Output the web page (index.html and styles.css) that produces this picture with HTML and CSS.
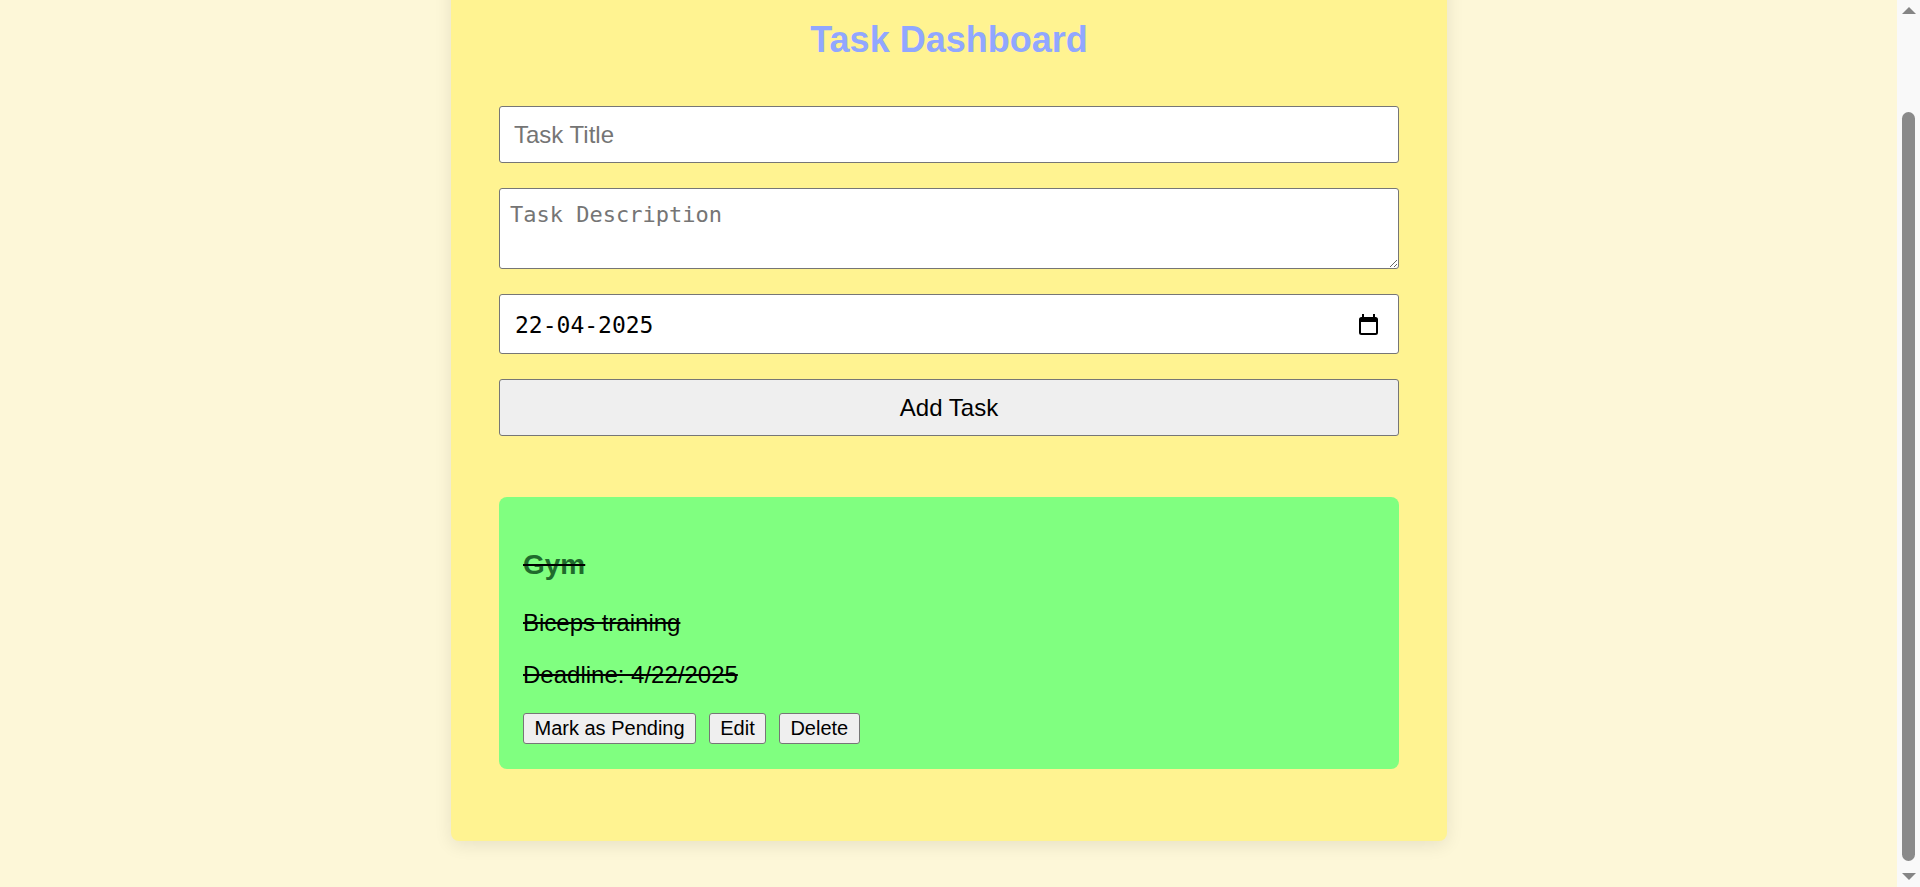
FILE: index.html
```html
<!DOCTYPE html>
<html lang="en">
<head>
<meta charset="utf-8">
<title>Task Dashboard</title>
<link rel="stylesheet" href="styles.css">
</head>
<body>
<div class="container">
  <h1 class="title">Task Dashboard</h1>
  <form class="task-form">
    <input class="field field-text" type="text" placeholder="Task Title">
    <textarea class="field field-area" placeholder="Task Description"></textarea>
    <div class="field field-date">
      <span class="date-value">22-04-2025</span>
      <svg class="cal-icon" width="19" height="21" viewBox="0 0 19 21" aria-hidden="true">
        <path d="M3 0h2v4H3zM14 0h2v4h-2z" fill="#000"/>
        <path fill="#000" fill-rule="evenodd" d="M2.5 3h14A2.5 2.5 0 0 1 19 5.5v13a2.5 2.5 0 0 1-2.5 2.5h-14A2.5 2.5 0 0 1 0 18.5v-13A2.5 2.5 0 0 1 2.5 3zM2 8v10.5a.5.5 0 0 0 .5.5h14a.5.5 0 0 0 .5-.5V8z"/>
      </svg>
    </div>
    <button type="button" class="add-btn">Add Task</button>
  </form>
  <div class="task-list">
    <div class="task-card">
      <h3 class="task-title done">Gym</h3>
      <p class="task-text done">Biceps training</p>
      <p class="task-text done">Deadline: 4/22/2025</p>
      <div class="task-actions">
        <button type="button" class="action-btn">Mark as Pending</button>
        <button type="button" class="action-btn">Edit</button>
        <button type="button" class="action-btn">Delete</button>
      </div>
    </div>
  </div>
</div>
<div class="scrollbar" aria-hidden="true">
  <span class="sb-arrow sb-up"></span>
  <span class="sb-thumb"></span>
  <span class="sb-arrow sb-down"></span>
</div>
<script src="script.js"></script>
</body>
</html>
```

FILE: styles.css
```css
html {
  background: #fdf7d8;
}

body {
  margin: 0;
  padding: 40px 22px 46px 0;
  background: #fdf7d8;
  font-family: "Liberation Sans", Arial, sans-serif;
  font-size: 24px;
  color: #000;
}

.container {
  max-width: 900px;
  margin: 0 auto;
  padding: 48px;
  background: #fff391;
  border-radius: 8px;
  box-shadow: 0 4px 18px rgba(0, 0, 0, 0.09);
}

.title {
  margin: 0 0 45px;
  text-align: center;
  font-size: 36px;
  font-weight: bold;
  line-height: normal;
  color: #91a7ff;
}

.task-form {
  display: flex;
  flex-direction: column;
  gap: 25px;
  margin: 0;
}

.field {
  box-sizing: border-box;
  width: 100%;
  margin: 0;
  border: 1px solid #767676;
  border-radius: 3px;
  background: #fff;
  color: #000;
}

.field-text {
  height: 57px;
  padding: 14px;
  font: 24px/27px "Liberation Sans", Arial, sans-serif;
}

.field-text::placeholder,
.field-area::placeholder {
  color: #757575;
}

.field-area {
  display: block;
  height: 81px;
  padding: 12px 10px;
  font: 22px/27px "DejaVu Sans Mono", monospace;
  resize: both;
}

.field-date {
  height: 60px;
  display: flex;
  align-items: center;
  justify-content: space-between;
  padding: 0 20px 0 15px;
  font: 23px/27px "DejaVu Sans Mono", monospace;
}

.date-value {
  margin-top: 3px;
}

.cal-icon {
  display: block;
}

.add-btn {
  box-sizing: border-box;
  width: 100%;
  height: 57px;
  margin: 0;
  padding: 14px;
  font: 24px/27px "Liberation Sans", Arial, sans-serif;
  color: #000;
  background: #efefef;
  border: 1px solid #767676;
  border-radius: 3px;
}

.task-list {
  margin-top: 60.5px;
}

.task-card {
  padding: 24px 24px 25px;
  margin-bottom: 24px;
  background: #80ff80;
  border-radius: 8px;
}

.done {
  text-decoration: line-through;
  text-decoration-color: #000;
}

.task-title {
  margin: 28px 0;
  font-size: 28px;
  font-weight: bold;
  line-height: normal;
  color: #1f6b2c;
}

.task-text {
  margin: 24px 0;
  line-height: normal;
}

.action-btn {
  margin: 0 6px 0 0;
  padding: 3px 10.5px;
  font: 20px/23px "Liberation Sans", Arial, sans-serif;
  color: #000;
  background: #efefef;
  border: 1px solid #767676;
  border-radius: 3px;
}

.scrollbar {
  position: fixed;
  top: 0;
  right: 0;
  width: 23px;
  height: 100vh;
  background: #f9f9f9;
  display: flex;
  flex-direction: column;
  align-items: center;
}

.sb-arrow {
  width: 0;
  height: 0;
  border-left: 7px solid transparent;
  border-right: 7px solid transparent;
}

.sb-up {
  margin-top: 7px;
  border-bottom: 7px solid #858585;
}

.sb-thumb {
  width: 13px;
  height: 749px;
  margin-top: 98px;
  background: #8a8a8a;
  border-radius: 6.5px;
}

.sb-down {
  margin-top: 12px;
  border-top: 7px solid #858585;
}
```

FILE: script.js
```js
function scrollToBottom() {
  window.scrollTo(0, document.documentElement.scrollHeight);
}
scrollToBottom();
window.addEventListener('load', scrollToBottom);
```
